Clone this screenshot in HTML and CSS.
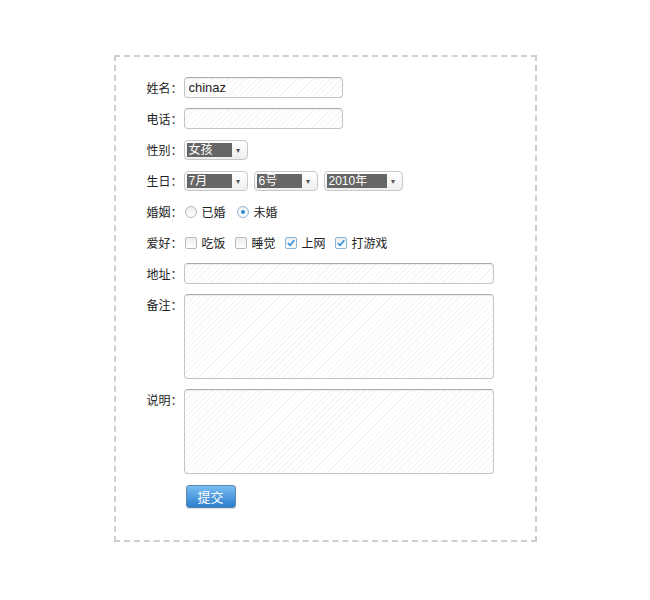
FILE: index.html
```html
<!DOCTYPE html>
<html lang="zh-CN">
  <head>
    <meta charset="UTF-8" />
    <title>表单</title>
    <link rel="stylesheet" href="styles.css">
  </head>
  <body>
    <div class="form-box">
      <form class="reg-form">
        <div class="row">
          <label class="lbl">姓名：</label>
          <input class="txt" type="text" value="chinaz" />
        </div>
        <div class="row">
          <label class="lbl">电话：</label>
          <input class="txt" type="text" />
        </div>
        <div class="row">
          <label class="lbl">性别：</label>
          <div class="sel sel-sex"><span class="val">女孩</span><span class="arrow">▾</span></div>
        </div>
        <div class="row">
          <label class="lbl">生日：</label>
          <div class="sel sel-month"><span class="val">7月</span><span class="arrow">▾</span></div>
          <div class="sel sel-day"><span class="val">6号</span><span class="arrow">▾</span></div>
          <div class="sel sel-year"><span class="val">2010年</span><span class="arrow">▾</span></div>
        </div>
        <div class="row">
          <label class="lbl">婚姻：</label>
          <span class="opt"><span class="radio"></span>已婚</span>
          <span class="opt"><span class="radio on"></span>未婚</span>
        </div>
        <div class="row">
          <label class="lbl">爱好：</label>
          <span class="opt tight"><span class="check"></span>吃饭</span>
          <span class="opt tight"><span class="check"></span>睡觉</span>
          <span class="opt tight"><span class="check on"><svg viewBox="0 0 12 12" width="12" height="12"><path d="M2.8 6 L5 8.3 L9.3 3.2" fill="none" stroke="#2f8fd6" stroke-width="1.6"/></svg></span>上网</span>
          <span class="opt tight"><span class="check on"><svg viewBox="0 0 12 12" width="12" height="12"><path d="M2.8 6 L5 8.3 L9.3 3.2" fill="none" stroke="#2f8fd6" stroke-width="1.6"/></svg></span>打游戏</span>
        </div>
        <div class="row">
          <label class="lbl">地址：</label>
          <input class="txt wide" type="text" />
        </div>
        <div class="row top">
          <label class="lbl">备注：</label>
          <textarea class="area"></textarea>
        </div>
        <div class="row top">
          <label class="lbl">说明：</label>
          <textarea class="area"></textarea>
        </div>
        <div class="row btn-row">
          <span class="lbl"></span>
          <button type="button" class="btn">提交</button>
        </div>
      </form>
    </div>
  </body>
</html>
```

FILE: styles.css
```css
body {
  margin: 0;
  background: #fff;
  font-family: "Noto Sans CJK SC", "Liberation Sans", sans-serif;
  font-size: 12px;
  color: #222;
}

.form-box {
  width: 388px;
  margin: 55px auto 0;
  border: 2px dashed #cfcfcf;
  padding: 20px 0 32px 31px;
}

.reg-form {
  display: flex;
  flex-direction: column;
  gap: 10px;
}

.row {
  display: flex;
  align-items: center;
  min-height: 21px;
}

.row.top {
  align-items: flex-start;
}

.btn-row {
  margin-top: 1px;
}

.lbl {
  width: 37px;
  flex: none;
  line-height: 21px;
  white-space: nowrap;
}

.txt {
  width: 159px;
  height: 21px;
  box-sizing: border-box;
  margin: 0;
  padding: 0 4px;
  border: 1px solid #c4c4c4;
  border-top-color: #aaa;
  border-radius: 4px;
  font-family: "Liberation Sans", "Noto Sans CJK SC", sans-serif;
  font-size: 13px;
  color: #222;
  background: repeating-linear-gradient(135deg, #fff 0 3px, #f5f5f5 3px 4px);
  box-shadow: inset 0 1px 1px rgba(0, 0, 0, 0.06);
}

.txt.wide {
  width: 310px;
}

.area {
  width: 310px;
  height: 85px;
  box-sizing: border-box;
  margin: 0;
  border: 1px solid #c4c4c4;
  border-top-color: #aaa;
  border-radius: 4px;
  resize: none;
  background: repeating-linear-gradient(135deg, #fff 0 3px, #f5f5f5 3px 4px);
  box-shadow: inset 0 1px 1px rgba(0, 0, 0, 0.06);
}

.sel {
  display: flex;
  align-items: stretch;
  height: 20px;
  box-sizing: border-box;
  border: 1px solid #c8c8c8;
  border-radius: 4px;
  padding: 2px;
  background: linear-gradient(#fff, #eee);
  margin-right: 6px;
}

.sel .val {
  background: #666;
  color: #fff;
  font-size: 12px;
  line-height: 14px;
  padding-left: 2px;
  font-family: "Liberation Sans", "Noto Sans CJK SC", sans-serif;
}

.sel .arrow {
  width: 13px;
  text-align: center;
  font-size: 8px;
  line-height: 14px;
  color: #555;
}

.sel-sex .val,
.sel-month .val,
.sel-day .val {
  width: 43px;
}

.sel-year .val {
  width: 58px;
}

.opt {
  display: flex;
  align-items: center;
  margin-right: 10px;
  font-size: 12px;
}

.opt.tight {
  margin-right: 8px;
}

.radio {
  width: 12px;
  height: 12px;
  box-sizing: border-box;
  border: 1px solid #b9b9b9;
  border-radius: 50%;
  background: linear-gradient(#eee, #fff);
  margin: 0 5px 0 1px;
  position: relative;
}

.radio.on {
  border-color: #8ab6dc;
}

.radio.on::after {
  content: "";
  position: absolute;
  left: 3px;
  top: 3px;
  width: 4px;
  height: 4px;
  border-radius: 50%;
  background: #2f8fd6;
}

.check {
  width: 12px;
  height: 12px;
  box-sizing: border-box;
  border: 1px solid #b9b9b9;
  border-radius: 2px;
  background: linear-gradient(#eee, #fff);
  margin: 0 5px 0 1px;
  display: flex;
}

.check svg {
  margin: -1px;
}

.check.on {
  border-color: #8ab6dc;
}

.btn {
  margin-left: 2px;
  width: 50px;
  height: 23px;
  border: 1px solid #5f87ad;
  border-radius: 3px;
  background: linear-gradient(#79bdf2, #2a7dcf);
  color: #fff;
  font-family: "Noto Sans CJK SC", sans-serif;
  font-size: 13px;
  padding: 0;
  box-shadow: 0 1px 1px rgba(0, 0, 0, 0.15);
}
```
